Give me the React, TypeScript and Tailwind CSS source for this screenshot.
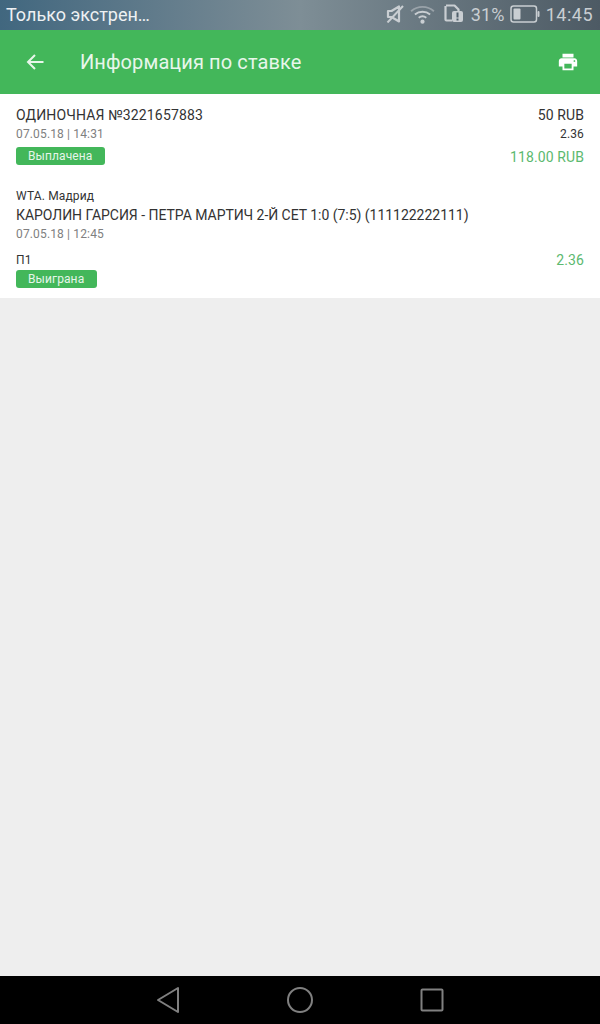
import React from "react";

function StatusIcons() {
  return (
    <div className="flex items-center text-[#c9ced2]">
      {/* muted speaker */}
      <svg width="18" height="18" viewBox="0 0 18 18" fill="none" className="mr-[6px] mb-[2px]">
        <path d="M2 6h3.500L13 1.500v15L5.500 12H2z" stroke="currentColor" strokeWidth="2.200" strokeLinejoin="round" />
        <path d="M1.500 17.500 17 1" stroke="currentColor" strokeWidth="2" />
      </svg>
      {/* wifi */}
      <svg width="25" height="19" viewBox="0 0 26 20" fill="none" className="mr-[9px] mb-[2px]">
        <path d="M1 6.500C8 .5 18 .5 25 6.500" stroke="currentColor" strokeWidth="2" opacity="0.5" />
        <path d="M5 10c4.500-3.800 11.500-3.800 16 0" stroke="currentColor" strokeWidth="2" />
        <path d="M9 13.500c2.400-2 5.600-2 8 0" stroke="currentColor" strokeWidth="2" />
        <circle cx="13" cy="17.500" r="2.200" fill="currentColor" />
      </svg>
      {/* sim with alert */}
      <svg width="19" height="18" viewBox="0 0 19 18" fill="none" className="mr-[8px] mb-[4px]">
        <path d="M2 1.500h8.500l4 4V7M8 16.500H2.500a1 1 0 0 1-1-1V2" stroke="currentColor" strokeWidth="2.200" strokeLinejoin="round" />
        <rect x="8" y="7" width="11" height="11" rx="2" fill="currentColor" />
        <rect x="12.500" y="8.500" width="2" height="5" fill="#4f5f6a" />
        <rect x="12.500" y="14.500" width="2" height="2" fill="#4f5f6a" />
      </svg>
      <span className="mr-[5px] text-[18px] leading-none tracking-[0.2px]">31%</span>
      {/* battery */}
      <svg width="30" height="18" viewBox="0 0 30 18" fill="none" className="mr-[6px] mb-[2px]">
        <rect x="1" y="1" width="25.500" height="16" rx="2.500" stroke="currentColor" strokeWidth="1.500" />
        <rect x="3.500" y="3.500" width="7" height="11" rx="1" fill="currentColor" />
        <rect x="27.500" y="6" width="2" height="6" rx="1" fill="currentColor" />
      </svg>
      <span className="mr-[7px] text-[18px] leading-none tracking-[0.5px]">14:45</span>
    </div>
  );
}

function Badge({ label, width }: { label: string; width: string }) {
  return (
    <div className={`h-[18px] ${width} rounded-[3px] bg-[#43b75a] pl-3 text-[12px] leading-[18px] tracking-[0.1px] text-[#e6f5e9]`}>
      {label}
    </div>
  );
}

export default function App() {
  return (
    <div className="flex h-[1024px] w-[600px] flex-col overflow-hidden bg-[#eeeeee] font-['Roboto',sans-serif]">
      <div className="flex h-[30px] items-center justify-between bg-gradient-to-r from-[#41677f] via-[#7e8e96] to-[#4d5a64] pl-[6px]">
        <span className="text-[18px] leading-none text-[#eef1f3]">Только экстрен…</span>
        <StatusIcons />
      </div>

      <header className="flex h-[64px] items-center bg-[#43b75a] pl-[26px] pr-[21px]">
        <svg width="18" height="18" viewBox="0 0 18 18" fill="none" className="mr-[36px]">
          <path d="M17.500 9H2M9 2 2 9l7 7" stroke="#e8f6eb" strokeWidth="2" />
        </svg>
        <h1 className="flex-1 text-[20px] font-normal tracking-[0.1px] text-[#e8f6eb]">Информация по ставке</h1>
        <svg width="22" height="22" viewBox="0 0 24 24" fill="#ffffff">
          <path d="M19 8H5c-1.660 0-3 1.340-3 3v6h4v4h12v-4h4v-6c0-1.660-1.340-3-3-3zm-3 11H8v-5h8v5zm3-7c-.550 0-1-.450-1-1s.450-1 1-1 1 .450 1 1-.450 1-1 1zm-1-9H6v4h12V3z" />
        </svg>
      </header>

      <main className="h-[204px] bg-white px-4 pt-[12px] text-[#333333]">
        <div className="flex justify-between">
          <div>
            <p className="text-[14px] leading-[19px] tracking-[0.15px]">ОДИНОЧНАЯ №3221657883</p>
            <p className="text-[12px] leading-[18px] tracking-[0.15px] text-[#808080]">07.05.18 | 14:31</p>
            <div className="mt-[4px]">
              <Badge label="Выплачена" width="w-[89px]" />
            </div>
          </div>
          <div className="text-right">
            <p className="text-[14px] leading-[19px] tracking-[0.1px]">50 RUB</p>
            <p className="text-[12px] leading-[18px] tracking-[0.15px]">2.36</p>
            <p className="mt-[5px] text-[14px] leading-[18px] tracking-[0.1px] text-[#5cb96f]">118.00 RUB</p>
          </div>
        </div>

        <div className="mt-[21px]">
          <p className="text-[12px] leading-[18px] tracking-[0.15px]">WTA. Мадрид</p>
          <p className="text-[14px] leading-[20px] tracking-[-0.03px]">КАРОЛИН ГАРСИЯ - ПЕТРА МАРТИЧ 2-Й СЕТ 1:0 (7:5) (111122222111)</p>
          <p className="text-[12px] leading-[18px] tracking-[0.15px] text-[#808080]">07.05.18 | 12:45</p>
          <div className="mt-[8px] flex justify-between">
            <div>
              <p className="mb-[1px] text-[12px] leading-[18px] tracking-[0.3px]">П1</p>
              <Badge label="Выиграна" width="w-[81px]" />
            </div>
            <p className="text-[14px] leading-[18px] tracking-[0.1px] text-[#5cb96f]">2.36</p>
          </div>
        </div>
      </main>

      <div className="flex-1" />

      <nav className="flex h-[48px] items-center justify-center bg-black">
        <div className="flex w-[132px] justify-center">
          <svg width="24" height="28" viewBox="0 0 24 28" fill="none">
            <path d="M22 2v24L2 14z" stroke="#808080" strokeWidth="2" strokeLinejoin="round" />
          </svg>
        </div>
        <div className="flex w-[132px] justify-center">
          <svg width="28" height="28" viewBox="0 0 28 28" fill="none">
            <circle cx="14" cy="14" r="12" stroke="#808080" strokeWidth="2" />
          </svg>
        </div>
        <div className="flex w-[132px] justify-center">
          <svg width="24" height="24" viewBox="0 0 24 24" fill="none">
            <rect x="1.500" y="1.500" width="21" height="21" rx="1" stroke="#808080" strokeWidth="2" />
          </svg>
        </div>
      </nav>
    </div>
  );
}
